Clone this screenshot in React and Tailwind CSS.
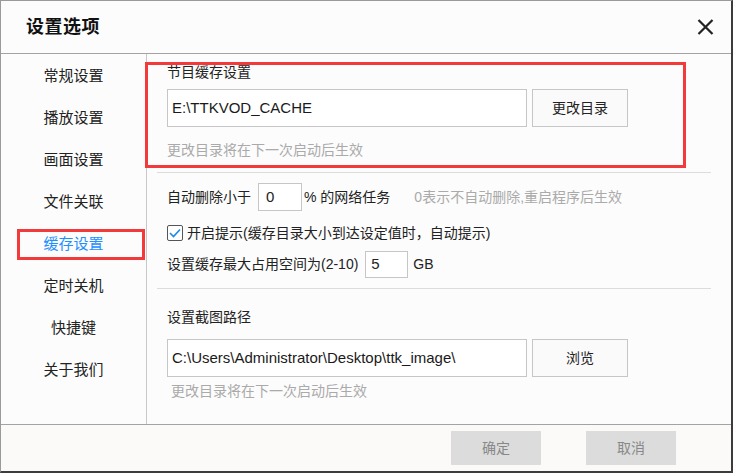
import { useState } from "react";

const menus = ["常规设置", "播放设置", "画面设置", "文件关联", "缓存设置", "定时关机", "快捷键", "关于我们"];

const font = { fontFamily: '"Liberation Sans", "Noto Sans CJK SC", sans-serif' };

const CloseIcon = () => (
  <svg width="17" height="16" viewBox="0 0 17 16">
    <path d="M1.5 1 L15.5 15 M15.5 1 L1.5 15" stroke="#222" strokeWidth="2.2" fill="none" />
  </svg>
);

const PathInput = ({ value }) => (
  <div className="w-[360px] h-[38px] bg-white border border-[#c6c6c6] flex items-center pl-[4px] text-[15px] text-[#1a1a1a] whitespace-nowrap overflow-hidden">
    {value}
  </div>
);

const Btn = ({ children }) => (
  <div className="w-[96px] h-[38px] ml-[5px] border border-[#c6c6c6] bg-[#fafafa] flex items-center justify-center text-[14px] text-[#222]">
    {children}
  </div>
);

export default function App() {
  const [active, setActive] = useState(4);
  const [notify, setNotify] = useState(true);

  return (
    <div
      className="relative w-[733px] h-[473px] bg-[#fcfcfc] border-l border-t border-[#9a9a9a] border-r-2 border-r-[#3c3c3c] border-b-2 border-b-[#3c3c3c] flex flex-col overflow-hidden"
      style={font}
    >
      {/* title bar */}
      <div className="h-[53px] shrink-0 flex items-center justify-between border-b border-[#a3a3a3] pl-[25px] pr-[17px]">
        <div className="text-[18px] font-bold text-[#111] tracking-[0.5px]">设置选项</div>
        <CloseIcon />
      </div>

      {/* body */}
      <div className="flex h-[371px] shrink-0 border-b border-[#a3a3a3]">
        <div className="w-[146px] shrink-0 border-r border-[#c8c8c8] pt-px flex flex-col">
          {menus.map((m, i) => (
            <div
              key={m}
              onClick={() => setActive(i)}
              className={`h-[42px] flex items-center justify-center text-[15px] cursor-pointer ${
                active === i ? "text-[#1e90ff]" : "text-[#222]"
              }`}
            >
              {m}
            </div>
          ))}
        </div>

        <div className="flex-1 flex flex-col text-[14px] text-[#222]">
          <div className="pl-[20px] pt-[8px] flex flex-col">
            <div className="leading-[20px]">节目缓存设置</div>
            <div className="flex mt-[7px]">
              <PathInput value={"E:\\TTKVOD_CACHE"} />
              <Btn>更改目录</Btn>
            </div>
            <div className="leading-[20px] mt-[13px] text-[#aaa]">更改目录将在下一次启动后生效</div>
          </div>

          <div className="ml-[10px] w-[554px] h-px bg-[#dcdcdc] mt-[12px]" />

          <div className="pl-[20px] flex flex-col">
            <div className="flex items-center h-[28px] mt-[10px]">
              <span>自动删除小于</span>
              <div className="w-[44px] h-[28px] ml-[7px] bg-white border border-[#c6c6c6] flex items-center pl-[7px] text-[15px]">0</div>
              <span className="ml-[2px]">% 的网络任务</span>
              <span className="ml-[24px] text-[#aaa]">0表示不自动删除,重启程序后生效</span>
            </div>

            <div className="flex items-center h-[20px] mt-[12px] cursor-pointer" onClick={() => setNotify(!notify)}>
              <div className="w-[16px] h-[16px] border border-[#555] rounded-[2px] bg-white flex items-center justify-center">
                {notify && (
                  <svg width="12" height="10" viewBox="0 0 12 10">
                    <path d="M1 5 L4.5 8.5 L11 1.5" stroke="#1e88e5" strokeWidth="1.6" fill="none" />
                  </svg>
                )}
              </div>
              <span className="ml-[4px]">开启提示(缓存目录大小到达设定值时，自动提示)</span>
            </div>

            <div className="flex items-center h-[27px] mt-[8px]">
              <span>设置缓存最大占用空间为(2-10)</span>
              <div className="w-[43px] h-[27px] ml-[7px] bg-white border border-[#c6c6c6] flex items-center pl-[5px] text-[15px]">5</div>
              <span className="ml-[5px]">GB</span>
            </div>
          </div>

          <div className="ml-[10px] w-[554px] h-px bg-[#dcdcdc] mt-[10px]" />

          <div className="pl-[20px] flex flex-col">
            <div className="leading-[20px] mt-[18px]">设置截图路径</div>
            <div className="flex mt-[12px]">
              <PathInput value={"C:\\Users\\Administrator\\Desktop\\ttk_image\\"} />
              <Btn>浏览</Btn>
            </div>
            <div className="leading-[20px] mt-[4px] pl-[4px] text-[#aaa]">更改目录将在下一次启动后生效</div>
          </div>
        </div>
      </div>

      {/* footer */}
      <div className="flex-1 bg-[#fbfaf9] flex items-start justify-end pt-[6px] pr-[55px] gap-[45px]">
        <div className="w-[90px] h-[34px] bg-[#dcdcdc] flex items-center justify-center text-[14px] text-[#888]">确定</div>
        <div className="w-[90px] h-[34px] bg-[#dcdcdc] flex items-center justify-center text-[14px] text-[#888]">取消</div>
      </div>

      {/* red highlight annotations */}
      <div className="absolute left-[144px] top-[61px] w-[541px] h-[106px] border-[3px] border-[#f23a3a] pointer-events-none" />
      <div className="absolute left-[16px] top-[228px] w-[128px] h-[31px] border-[3px] border-[#f23a3a] pointer-events-none" />
    </div>
  );
}
